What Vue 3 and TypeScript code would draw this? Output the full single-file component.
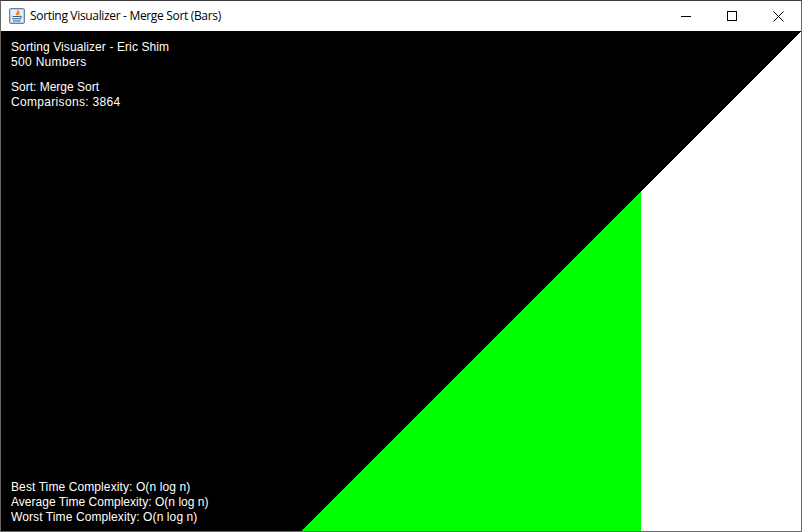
<script setup lang="ts">
interface Line { text: string; wide?: 'digits' | 'slight' | 'faint' }
const topLines: Line[][] = [
  [
    { text: 'Sorting Visualizer - Eric Shim', wide: 'slight' },
    { text: '500 Numbers', wide: 'digits' },
  ],
  [{ text: 'Sort: Merge Sort' }, { text: 'Comparisons: 3864', wide: 'digits' }],
]
const complexity: Line[] = [
  { text: 'Best Time Complexity: O(n log n)', wide: 'slight' },
  { text: 'Average Time Complexity: O(n log n)', wide: 'faint' },
  { text: 'Worst Time Complexity: O(n log n)', wide: 'slight' },
]
</script>

<template>
  <div class="window">
    <header class="titlebar">
      <svg class="app-icon" width="16" height="16" viewBox="0 0 16 16">
        <rect x="0.5" y="0.5" width="15" height="15" rx="1.5" fill="#e6edf5" stroke="#5f84a8" />
        <rect x="1.5" y="1.5" width="13" height="13" fill="none" stroke="#b9cde0" />
        <path d="M8.8 2.2c1.4 1.7-2.4 2.8-.9 4.9M10.6 4c-1.2.8-1.9 1.6-1 3" fill="none" stroke="#ee7a1e" stroke-width="1.4" />
        <path d="M3.5 8h7.5v1H3.5zM3 10.2h9v1H3zM4 12.4h7.5v1H4z" fill="#2f6490" />
        <path d="M11 8.2c1.9-.4 2.5 1.4.2 2" fill="none" stroke="#2f6490" />
      </svg>
      <span class="title">Sorting Visualizer - Merge Sort (Bars)</span>
      <div class="controls">
        <span class="control">
          <svg width="10" height="10" viewBox="0 0 10 10"><path d="M0 5.5h10" stroke="#000" fill="none" /></svg>
        </span>
        <span class="control">
          <svg width="10" height="10" viewBox="0 0 10 10"><rect x="0.5" y="0.5" width="9" height="9" stroke="#000" fill="none" /></svg>
        </span>
        <span class="control">
          <svg width="11" height="11" viewBox="0 0 11 11"><path d="M.5.5l10 10M10.5.5l-10 10" stroke="#000" fill="none" stroke-width="1" /></svg>
        </span>
      </div>
    </header>
    <main class="canvas">
      <svg class="bars" width="800" height="500" viewBox="0 0 800 500" shape-rendering="crispEdges">
        <polygon points="300,500 640,160 640,500" fill="#00ff00" />
        <polygon points="640,160 800,0 800,500 640,500" fill="#ffffff" />
      </svg>
      <div class="overlay">
        <div class="group-stack">
          <div v-for="(group, g) in topLines" :key="g" class="group">
            <div v-for="line in group" :key="line.text" class="line" :class="line.wide">{{ line.text }}</div>
          </div>
        </div>
        <div class="group">
          <div v-for="line in complexity" :key="line.text" class="line" :class="line.wide">{{ line.text }}</div>
        </div>
      </div>
    </main>
  </div>
</template>

<style>
html, body { margin: 0; background: #fff; }
</style>

<style scoped>
.window {
  width: 802px;
  height: 532px;
  box-sizing: border-box;
  border: 1px solid #666;
  border-top-color: #3a3a3a;
  display: flex;
  flex-direction: column;
  overflow: hidden;
}
.titlebar {
  height: 30px;
  flex: none;
  display: flex;
  align-items: center;
  padding-left: 8px;
  background: #fff;
}
.app-icon { flex: none; margin-right: 5px; }
.title {
  font: 12px/16px "Open Sans", sans-serif;
  letter-spacing: -0.33px;
  color: #000;
  white-space: nowrap;
}
.controls { margin-left: auto; display: flex; height: 100%; }
.control {
  width: 46px;
  display: flex;
  align-items: center;
  justify-content: center;
}
.canvas {
  position: relative;
  flex: 1;
  background: #000;
  overflow: hidden;
}
.bars { position: absolute; left: 0; top: 0; display: block; }
.overlay {
  position: absolute;
  inset: 0;
  box-sizing: border-box;
  padding: 9px 10px 6px;
  display: flex;
  flex-direction: column;
  justify-content: space-between;
  color: #fff;
  font: 12px/15px "Liberation Sans", Arial, sans-serif;
}
.group-stack { display: flex; flex-direction: column; gap: 10px; }
.line { white-space: nowrap; height: 15px; }
.digits { letter-spacing: 0.32px; }
.slight { letter-spacing: 0.1px; }
.faint { letter-spacing: 0.03px; }
</style>
